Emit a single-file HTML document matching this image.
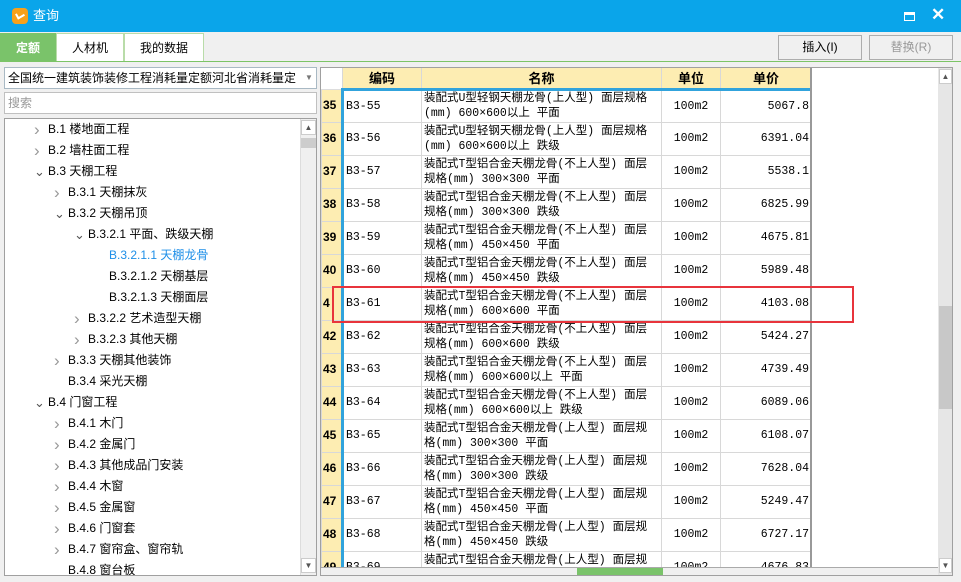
<!DOCTYPE html>
<html><head><meta charset="utf-8"><style>
*{margin:0;padding:0;box-sizing:border-box}
body{width:961px;height:582px;overflow:hidden;background:#f0f0f0;font-family:"Liberation Sans","Noto Sans CJK SC",sans-serif;font-size:12px;color:#000;position:relative}
.abs{position:absolute}
.title{left:0;top:0;width:961px;height:32px;background:#0aa5ea;color:#fff;font-size:13px}
.tabs{top:32px;left:0;height:30px;width:961px}
.tab{position:absolute;top:1px;height:29px;border:1px solid #b9dca9;background:#fff;text-align:center;line-height:28px;font-size:12px}
.gl{top:61px;left:0;width:961px;height:1px;background:#7cc466}
.btn{position:absolute;top:35px;height:25px;border:1px solid #adadad;background:#f0f0f0;text-align:center;line-height:23px;font-size:12px}
.tree{left:4px;top:118px;width:313px;height:458px;background:#fff;border:1px solid #a0a0a0;overflow:hidden}
.ti{position:absolute;height:21px;line-height:21px;font-size:12px;white-space:nowrap}
.arr{position:absolute;color:#999;font-size:11px}
.grid{left:320px;top:67px;width:633px;height:509px;background:#fff;border:1px solid #a0a0a0;overflow:hidden}
table{border-collapse:collapse;position:absolute;left:0;top:0;table-layout:fixed}
td{border:1px solid #d8d8d8;font-size:11.5px;line-height:15px;padding:0 2px;overflow:hidden;white-space:nowrap;font-family:"Liberation Mono","Noto Sans CJK SC",monospace}
th{background:#fdedb2;border-right:1px solid #d8d8d8;border-bottom:3px solid #31a3dc;height:21px;font-size:13px;font-weight:bold}
td.n{background:#fdedb2;font-weight:bold;font-family:"Liberation Sans",sans-serif;font-size:12px;border-right:3px solid #31a3dc;padding:0 1px}
tr.r td{height:33px}
</style></head><body>
<div class="abs title">
 <div class="abs" style="left:12px;top:8px;width:16px;height:16px;background:#f7a11a;border-radius:4px"></div>
 <div class="abs" style="left:16px;top:12px;width:8px;height:6px;border-left:2px solid #fff;border-bottom:2px solid #fff;transform:rotate(-30deg)"></div>
 <div class="abs" style="left:33px;top:0;line-height:32px">查询</div>
 <div class="abs" style="left:904px;top:12px;width:11px;height:9px;border:1.5px solid #fff;border-top-width:3px"></div>
 <div class="abs" style="left:931px;top:5px;font-size:17px;font-weight:bold">✕</div>
</div>
<div class="abs tabs">
 <div class="tab" style="left:0;width:56px;background:#7ac36a;color:#fff;font-weight:bold;border-color:#7ac36a">定额</div>
 <div class="tab" style="left:56px;width:68px">人材机</div>
 <div class="tab" style="left:124px;width:80px">我的数据</div>
</div>
<div class="btn" style="left:778px;width:84px">插入(I)</div>
<div class="btn" style="left:869px;width:84px;color:#999">替换(R)</div>
<div class="abs gl"></div>
<div class="abs" style="left:4px;top:67px;width:313px;height:22px;background:#fff;border:1px solid #a9b9c4;line-height:20px;padding-left:3px;white-space:nowrap;overflow:hidden">全国统一建筑装饰装修工程消耗量定额河北省消耗量定<span class="abs" style="right:0;top:0;width:14px;background:#fff;color:#777;font-size:8px;text-align:center">▼</span></div>
<div class="abs" style="left:4px;top:92px;width:313px;height:22px;background:#fff;border:1px solid #c0c0c0;line-height:20px;padding-left:3px;color:#999">搜索</div>
<div class="abs tree">
 <div class="abs" style="left:295px;top:0;width:17px;height:456px;background:#f0f0f0;border-left:1px solid #ddd"></div>
 <div class="abs" style="left:296px;top:1px;width:15px;height:15px;background:#fff;border:1px solid #ccc;font-size:8px;color:#555;text-align:center;line-height:13px">▲</div>
 <div class="abs" style="left:296px;top:19px;width:15px;height:10px;background:#cdcdcd"></div>
 <div class="abs" style="left:296px;top:439px;width:15px;height:15px;background:#fff;border:1px solid #ccc;font-size:8px;color:#555;text-align:center;line-height:13px">▼</div>
</div>
<div class="abs grid">
<table>
<colgroup><col style="width:21px"><col style="width:79px"><col style="width:240px"><col style="width:59px"><col style="width:91px"></colgroup>
<tr><th style="background:#fff;border-bottom:1px solid #ddd"></th><th>编码</th><th>名称</th><th>单位</th><th>单价</th></tr>
</table>
<div class="abs" style="left:489px;top:0;width:2px;height:500px;background:#999"></div>
<div class="abs" style="left:617px;top:0;width:15px;height:507px;background:#e6e6e6"></div>
<div class="abs" style="left:618px;top:1px;width:13px;height:15px;background:#fff;border:1px solid #ccc;font-size:8px;color:#555;text-align:center;line-height:13px">▲</div>
<div class="abs" style="left:618px;top:238px;width:13px;height:103px;background:#c8c8c8"></div>
<div class="abs" style="left:618px;top:490px;width:13px;height:15px;background:#fff;border:1px solid #ccc;font-size:8px;color:#555;text-align:center;line-height:13px">▼</div>
<div class="abs" style="left:0;top:499px;width:617px;height:9px;background:#f0f0f0;border-top:1px solid #aaa"></div>
<div class="abs" style="left:256px;top:500px;width:86px;height:7px;background:#7ac36a"></div>
</div>
<div class="abs" style="left:332px;top:286px;width:522px;height:37px;border:2px solid #e8343c"></div>
<script>
var T=[[33,47,'›','B.1 楼地面工程'],[33,47,'›','B.2 墙柱面工程'],[33,47,'⌄','B.3 天棚工程'],[53,67,'›','B.3.1 天棚抹灰'],[53,67,'⌄','B.3.2 天棚吊顶'],[73,87,'⌄','B.3.2.1 平面、跌级天棚'],[0,108,'','B.3.2.1.1 天棚龙骨'],[0,108,'','B.3.2.1.2 天棚基层'],[0,108,'','B.3.2.1.3 天棚面层'],[73,87,'›','B.3.2.2 艺术造型天棚'],[73,87,'›','B.3.2.3 其他天棚'],[53,67,'›','B.3.3 天棚其他装饰'],[0,67,'','B.3.4 采光天棚'],[33,47,'⌄','B.4 门窗工程'],[53,67,'›','B.4.1 木门'],[53,67,'›','B.4.2 金属门'],[53,67,'›','B.4.3 其他成品门安装'],[53,67,'›','B.4.4 木窗'],[53,67,'›','B.4.5 金属窗'],[53,67,'›','B.4.6 门窗套'],[53,67,'›','B.4.7 窗帘盒、窗帘轨'],[0,67,'','B.4.8 窗台板']];
var tr=document.querySelector('.tree'),h='';
T.forEach(function(a,i){var y=i*21;
 if(a[2])h+='<div class="ti arr" style="left:'+(a[0]-4)+'px;top:'+y+'px;font-size:'+(a[2]=='›'?'17px':'13px')+';color:'+(a[2]=='›'?'#999':'#555')+'">'+a[2]+'</div>';
 h+='<div class="ti" style="left:'+(a[1]-4)+'px;top:'+y+'px;'+(i==6?'color:#1e8fe8':'')+'">'+a[3]+'</div>';});
tr.insertAdjacentHTML('afterbegin',h);
var R=[['35','B3-55','装配式U型轻钢天棚龙骨(上人型) 面层规格','(mm) 600×600以上 平面','5067.8'],['36','B3-56','装配式U型轻钢天棚龙骨(上人型) 面层规格','(mm) 600×600以上 跌级','6391.04'],['37','B3-57','装配式T型铝合金天棚龙骨(不上人型) 面层','规格(mm) 300×300 平面','5538.1'],['38','B3-58','装配式T型铝合金天棚龙骨(不上人型) 面层','规格(mm) 300×300 跌级','6825.99'],['39','B3-59','装配式T型铝合金天棚龙骨(不上人型) 面层','规格(mm) 450×450 平面','4675.81'],['40','B3-60','装配式T型铝合金天棚龙骨(不上人型) 面层','规格(mm) 450×450 跌级','5989.48'],['4','B3-61','装配式T型铝合金天棚龙骨(不上人型) 面层','规格(mm) 600×600 平面','4103.08'],['42','B3-62','装配式T型铝合金天棚龙骨(不上人型) 面层','规格(mm) 600×600 跌级','5424.27'],['43','B3-63','装配式T型铝合金天棚龙骨(不上人型) 面层','规格(mm) 600×600以上 平面','4739.49'],['44','B3-64','装配式T型铝合金天棚龙骨(不上人型) 面层','规格(mm) 600×600以上 跌级','6089.06'],['45','B3-65','装配式T型铝合金天棚龙骨(上人型) 面层规','格(mm) 300×300 平面','6108.07'],['46','B3-66','装配式T型铝合金天棚龙骨(上人型) 面层规','格(mm) 300×300 跌级','7628.04'],['47','B3-67','装配式T型铝合金天棚龙骨(上人型) 面层规','格(mm) 450×450 平面','5249.47'],['48','B3-68','装配式T型铝合金天棚龙骨(上人型) 面层规','格(mm) 450×450 跌级','6727.17'],['49','B3-69','装配式T型铝合金天棚龙骨(上人型) 面层规','格(mm) 600×600 平面','4676.83']];
var tb=document.querySelector('table'),s='';
R.forEach(function(r){s+='<tr class="r"><td class="n">'+r[0]+'</td><td>'+r[1]+'</td><td>'+r[2]+'<br>'+r[3]+'</td><td style="text-align:center">100m2</td><td style="text-align:right">'+r[4]+'</td></tr>';});
tb.insertAdjacentHTML('beforeend',s);
</script>
</body></html>
